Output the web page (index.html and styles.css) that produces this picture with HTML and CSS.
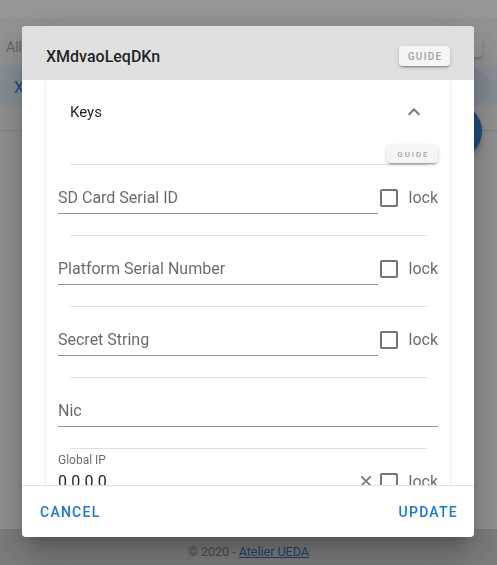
FILE: index.html
```html
<!DOCTYPE html>
<html lang="en">
<head>
<meta charset="utf-8">
<title>XMdvaoLeqDKn</title>
<link rel="stylesheet" href="styles.css">
</head>
<body>
<div class="page">
  <div class="page-top"></div>
  <div class="page-card">
    <div class="toolbar-row"><span class="tab">All</span><span class="tool-btn"></span></div>
    <div class="list-row"><span class="list-text">XMdvaoLeqDKn</span><span class="avatar"></span></div>
  </div>
  <div class="page-main"></div>
  <footer class="page-footer">© 2020 - <a href="#">Atelier UEDA</a></footer>
  <div class="fab"></div>
</div>

<div class="overlay">
  <div class="dialog">
    <div class="dialog-head">
      <span class="dialog-title">XMdvaoLeqDKn</span>
      <button class="guide guide-lg">GUIDE</button>
    </div>
    <div class="dialog-body">
      <div class="panel">
        <div class="panel-head">
          <span class="panel-title">Keys</span>
          <svg class="chev" viewBox="0 0 24 24" width="24" height="24"><path d="M12 8l-6 6 1.41 1.41L12 10.83l4.59 4.58L18 14z"/></svg>
        </div>
        <div class="panel-content">
          <div class="guide-row"><button class="guide guide-sm">GUIDE</button></div>
          <div class="divider"></div>
          <div class="row">
            <div class="field"><span class="label">SD Card Serial ID</span></div>
            <svg class="check" viewBox="0 0 24 24" width="24" height="24"><path d="M19 5v14H5V5h14m0-2H5c-1.1 0-2 .9-2 2v14c0 1.1.9 2 2 2h14c1.1 0 2-.9 2-2V5c0-1.1-.9-2-2-2z"/></svg>
            <span class="lock">lock</span>
          </div>
          <div class="divider"></div>
          <div class="row">
            <div class="field"><span class="label">Platform Serial Number</span></div>
            <svg class="check" viewBox="0 0 24 24" width="24" height="24"><path d="M19 5v14H5V5h14m0-2H5c-1.1 0-2 .9-2 2v14c0 1.1.9 2 2 2h14c1.1 0 2-.9 2-2V5c0-1.1-.9-2-2-2z"/></svg>
            <span class="lock">lock</span>
          </div>
          <div class="divider"></div>
          <div class="row">
            <div class="field"><span class="label">Secret String</span></div>
            <svg class="check" viewBox="0 0 24 24" width="24" height="24"><path d="M19 5v14H5V5h14m0-2H5c-1.1 0-2 .9-2 2v14c0 1.1.9 2 2 2h14c1.1 0 2-.9 2-2V5c0-1.1-.9-2-2-2z"/></svg>
            <span class="lock">lock</span>
          </div>
          <div class="divider"></div>
          <div class="row">
            <div class="field"><span class="label">Nic</span></div>
          </div>
          <div class="divider"></div>
          <div class="row">
            <div class="field filled">
              <span class="float-label">Global IP</span>
              <span class="value">0.0.0.0</span>
              <svg class="clear" viewBox="0 0 24 24" width="24" height="24"><path d="M7.3 7.3l9.4 9.4M16.7 7.3l-9.4 9.4"/></svg>
            </div>
            <svg class="check" viewBox="0 0 24 24" width="24" height="24"><path d="M19 5v14H5V5h14m0-2H5c-1.1 0-2 .9-2 2v14c0 1.1.9 2 2 2h14c1.1 0 2-.9 2-2V5c0-1.1-.9-2-2-2z"/></svg>
            <span class="lock">lock</span>
          </div>
          <div class="divider"></div>
        </div>
      </div>
    </div>
    <div class="dialog-actions">
      <button class="action">CANCEL</button>
      <button class="action">UPDATE</button>
    </div>
  </div>
</div>
</body>
</html>
```

FILE: styles.css
```css
* { box-sizing: border-box; }
html, body { margin: 0; padding: 0; }
body {
  font-family: Roboto, "Noto Sans", "Liberation Sans", sans-serif;
  background: #f5f5f5;
  height: 565px;
  overflow: hidden;
}

/* background page */
.page {
  position: relative;
  height: 565px;
  display: flex;
  flex-direction: column;
}
.page-top { height: 18px; background: #ffffff; }
.page-card {
  height: 113px;
  background: #f7f7f7;
  border-bottom: 1px solid #dcdcdc;
  display: flex;
  flex-direction: column;
}
.toolbar-row {
  height: 49px;
  display: flex;
  justify-content: space-between;
  align-items: flex-start;
  padding: 0 15px 0 6px;
}
.tab {
  margin-top: 22px;
  font-size: 14px;
  line-height: 14px;
  color: #a6a6a6;
}
.tool-btn {
  margin-top: 20px;
  width: 44px;
  height: 19px;
  border-radius: 4px;
  background: #ffffff;
  box-shadow: 0 2px 3px rgba(0,0,0,.25);
}
.list-row {
  height: 40px;
  background: #e3f2fd;
  display: flex;
  justify-content: space-between;
  align-items: center;
  padding: 0 7px 0 14px;
}
.list-text { font-size: 16px; color: #1976d2; }
.avatar {
  width: 36px;
  height: 36px;
  border-radius: 50%;
  background: #dbe4f6;
}
.page-main { flex: 1; }
.page-footer {
  height: 36px;
  padding-top: 14px;
  background: #cfcfcf;
  border-top: 1px solid #c8c8c8;
  text-align: center;
  font-size: 12.5px;
  line-height: 16px;
  color: #757575;
}
.page-footer a { color: #1a66b8; text-decoration: underline; }
.fab {
  position: absolute;
  left: 426px;
  top: 103px;
  width: 56px;
  height: 56px;
  border-radius: 50%;
  background: #1976d2;
  box-shadow: 0 3px 5px -1px rgba(0,0,0,.2), 0 6px 10px 0 rgba(0,0,0,.14);
}

/* overlay + dialog */
.overlay {
  position: fixed;
  inset: 0;
  background: rgba(33,33,33,.46);
  display: flex;
  align-items: flex-start;
  justify-content: flex-start;
  padding: 26px 0 0 22px;
}
.dialog {
  width: 452px;
  height: 511px;
  background: #ffffff;
  border-radius: 4px;
  overflow: hidden;
  display: flex;
  flex-direction: column;
  box-shadow: 0 11px 15px -7px rgba(0,0,0,.2), 0 24px 38px 3px rgba(0,0,0,.14), 0 9px 46px 8px rgba(0,0,0,.12);
}
.dialog-head {
  height: 54px;
  flex: none;
  background: #e0e0e0;
  padding: 6px 24px 0;
  display: flex;
  align-items: center;
  justify-content: space-between;
}
.dialog-title {
  font-size: 16px;
  font-weight: 500;
  color: rgba(0,0,0,.87);
}
.guide {
  border: none;
  padding: 0;
  margin: 0;
  font-family: Roboto, "Noto Sans", sans-serif;
  font-weight: 500;
  background: #f5f5f5;
  color: #a2a2a2;
  border-radius: 4px;
  box-shadow: 0 3px 1px -2px rgba(0,0,0,.2), 0 2px 2px 0 rgba(0,0,0,.14), 0 1px 5px 0 rgba(0,0,0,.12);
  cursor: pointer;
}
.guide-lg {
  width: 51px;
  height: 20px;
  font-size: 10px;
  letter-spacing: 1.3px;
  padding-left: 1.3px;
}
.guide-sm {
  width: 51px;
  height: 18px;
  font-size: 8px;
  letter-spacing: 1.9px;
  padding-left: 1.9px;
}

.dialog-body {
  height: 405px;
  flex: none;
  overflow: hidden;
  padding: 0 24px;
}
.panel {
  background: #ffffff;
  box-shadow: 0 2px 1px -1px rgba(0,0,0,.2), 0 1px 1px 0 rgba(0,0,0,.14), 0 1px 3px 0 rgba(0,0,0,.12);
}
.panel-head {
  height: 64px;
  padding: 0 24px;
  display: flex;
  align-items: center;
  justify-content: space-between;
}
.panel-title { font-size: 15px; color: rgba(0,0,0,.87); }
.chev { fill: #757575; }
.panel-content { padding: 0 12px 16px; }
.guide-row {
  display: flex;
  justify-content: flex-end;
  padding: 1px 0;
}
.divider {
  height: 1px;
  background: #e0e0e0;
  margin: 0 11px 0 12px;
}
.row {
  display: flex;
  align-items: center;
  padding: 16px 0 21px;
}
.field {
  position: relative;
  flex: 1;
  height: 33px;
  border-bottom: 1px solid rgba(0,0,0,.42);
  display: flex;
  align-items: center;
}
.label { font-size: 16px; color: rgba(0,0,0,.6); }
.float-label {
  position: absolute;
  left: 0;
  top: -11px;
  font-size: 12px;
  line-height: 12px;
  color: rgba(0,0,0,.6);
}
.value { flex: 1; font-size: 16px; color: rgba(0,0,0,.87); }
.clear { fill: none; stroke: #757575; stroke-width: 1.7; }
.check { fill: #757575; flex: none; margin-left: -1px; }
.lock {
  margin-left: 8px;
  font-size: 16px;
  color: rgba(0,0,0,.6);
}

.dialog-actions {
  height: 52px;
  flex: none;
  border-top: 1px solid #e0e0e0;
  display: flex;
  align-items: center;
  justify-content: space-between;
  padding: 0 16px 0 18px;
}
.action {
  border: none;
  background: none;
  padding: 0;
  font-family: Roboto, "Noto Sans", sans-serif;
  font-size: 14px;
  font-weight: 500;
  letter-spacing: 1.25px;
  color: #1976d2;
  cursor: pointer;
}
```
